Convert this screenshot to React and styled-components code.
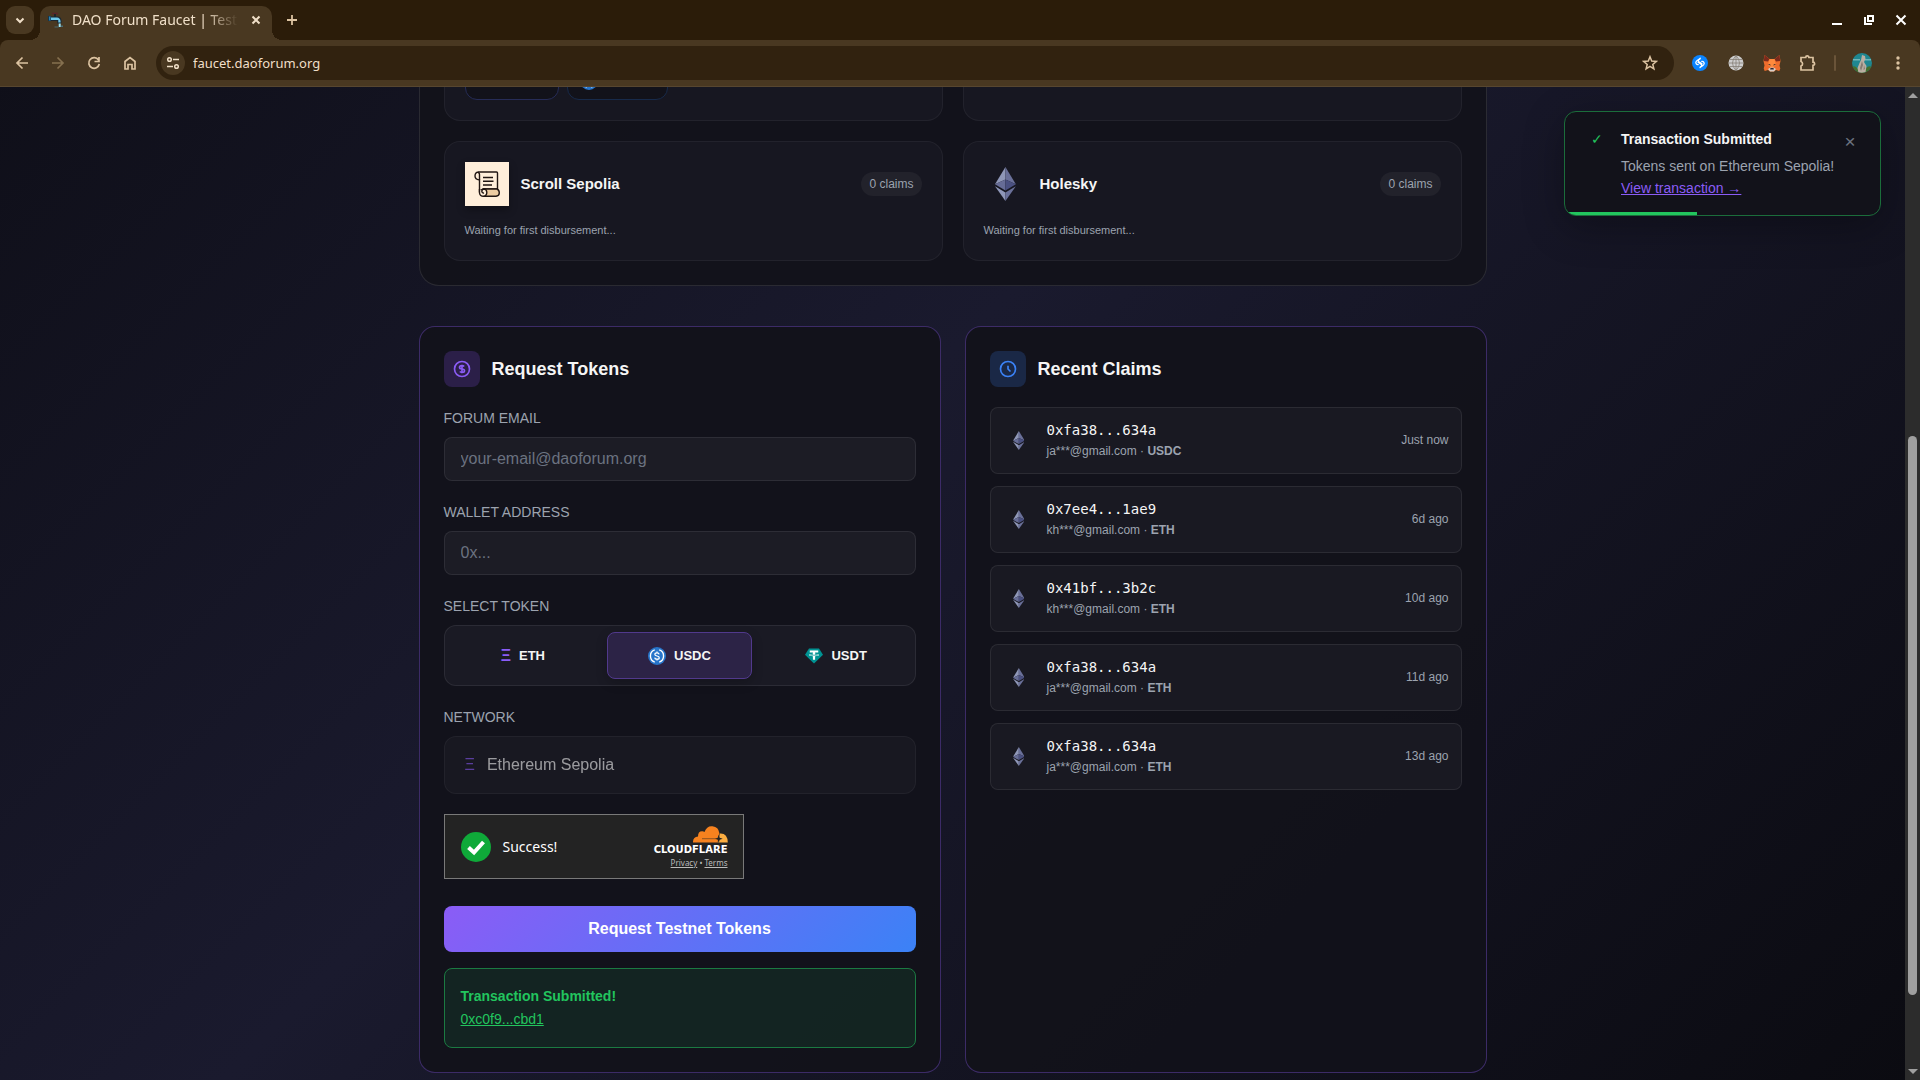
import React, { useState } from 'react';
import styled, { createGlobalStyle } from 'styled-components';

const GlobalStyle = createGlobalStyle`
  * {
    box-sizing: border-box;
  }

  body {
    margin: 0;
    background: #0a0a0f;
    color: #f5f5f5;
    font-family: 'Liberation Sans', Arial, sans-serif;
    font-size: 14px;
  }

  button,
  input {
    font-family: inherit;
  }
`;

/* ---------- browser frame ---------- */

const Window = styled.div`
  height: 100vh;
  display: flex;
  flex-direction: column;
  overflow: hidden;
`;

const TabStrip = styled.header`
  display: flex;
  height: 40px;
  padding: 6px 5px 0 6px;
  background: #2b1c09;
  color: #f0dfc8;
  font-family: 'Noto Sans', sans-serif;
`;

const ChromeButton = styled.button`
  display: flex;
  align-items: center;
  justify-content: center;
  width: ${(p) => p.$size || 28}px;
  height: 28px;
  padding: 0;
  border: 0;
  border-radius: 9px;
  background: ${(p) => p.$bg || 'none'};
  color: ${(p) => p.$color || '#dcc3a1'};
`;

const Tab = styled.div`
  position: relative;
  display: flex;
  align-items: center;
  gap: 8px;
  width: 232px;
  height: 34px;
  margin-left: 6px;
  padding: 0 6px 6px 8px;
  border-radius: 10px 10px 0 0;
  background: #493821;

  &::before,
  &::after {
    content: '';
    position: absolute;
    bottom: 0;
    width: 10px;
    height: 10px;
  }

  &::before {
    left: -10px;
    background: radial-gradient(circle at 0 0, transparent 10px, #493821 10px);
  }

  &::after {
    right: -10px;
    background: radial-gradient(circle at 100% 0, transparent 10px, #493821 10px);
  }
`;

const TabTitle = styled.span`
  flex: 1;
  white-space: nowrap;
  font-size: 14px;
  line-height: 20px;
  mask-image: linear-gradient(90deg, #000 80%, transparent);
`;

const WindowControls = styled.div`
  display: flex;
  gap: 4px;
  margin-left: auto;
`;

const ToolbarWrap = styled.div`
  background: #2b1c09;
`;

const Toolbar = styled.nav`
  display: flex;
  align-items: center;
  gap: 8px;
  height: 47px;
  padding: 0 8px;
  border-bottom: 1px solid #57462f;
  border-radius: 8px 8px 0 0;
  background: #493821;
`;

const Omnibox = styled.div`
  flex: 1;
  display: flex;
  align-items: center;
  gap: 8px;
  height: 34px;
  margin: 0 4px;
  padding: 0 10px 0 5px;
  border-radius: 17px;
  background: #31220f;
`;

const SiteInfo = styled.button`
  display: flex;
  align-items: center;
  justify-content: center;
  width: 24px;
  height: 24px;
  padding: 0;
  border: 0;
  border-radius: 50%;
  background: #493821;
  color: #f0dfc8;
`;

const Address = styled.input`
  flex: 1;
  min-width: 0;
  padding: 0;
  border: 0;
  outline: 0;
  background: none;
  color: #f0dfc8;
  font-family: 'Noto Sans', sans-serif;
  font-size: 13px;
`;

const Divider = styled.span`
  width: 2px;
  height: 16px;
  margin: 0 4px;
  border-radius: 1px;
  background: #6a5439;
`;

const Viewport = styled.div`
  flex: 1;
  min-height: 0;
  display: flex;
`;

const Page = styled.div`
  position: relative;
  flex: 1;
  overflow: hidden;
  background: linear-gradient(135deg, #0a0a0f 0%, #1a1a2e 50%, #0a0a0f 100%) 0 -590px / 100% 1706px;
`;

const Scrollbar = styled.div`
  display: flex;
  flex-direction: column;
  align-items: center;
  width: 15px;
  padding: 6px 0;
  background: #2c2c2c;
`;

const Arrow = styled.span`
  border: 5px solid transparent;
  border-top-width: ${(p) => (p.$down ? 5 : 0)}px;
  border-bottom-width: ${(p) => (p.$down ? 0 : 5)}px;
  border-${(p) => (p.$down ? 'top' : 'bottom')}-color: #9f9f9f;
`;

const Track = styled.div`
  flex: ${(p) => p.$grow};
`;

const Thumb = styled.div`
  flex: 558;
  width: 9px;
  border-radius: 5px;
  background: #9f9f9f;
`;

/* ---------- page ---------- */

const Container = styled.main`
  max-width: 1068px;
  margin: 0 auto;
`;

const Overview = styled.section`
  display: grid;
  grid-template-columns: 1fr 1fr;
  gap: 20px;
  padding: 0 24px 24px;
  border: 1px solid rgba(255, 255, 255, 0.1);
  border-top: 0;
  border-radius: 0 0 20px 20px;
  background: rgba(18, 18, 26, 0.95);
`;

const NetworkCard = styled.article`
  padding: 20px;
  border: 1px solid rgba(255, 255, 255, 0.05);
  border-radius: 16px;
  background: #171721;
`;

const ScrolledCard = styled(NetworkCard)`
  display: flex;
  gap: 8px;
  padding-top: 0;
  border-top: 0;
  border-radius: 0 0 16px 16px;
`;

const TokenChip = styled.div`
  width: ${(p) => p.$width}px;
  height: 37px;
  margin-top: -24px;
  padding: 8px 12px;
  border: 1px solid ${(p) => p.$border};
  border-radius: 12px;
  background: #12121a;
`;

const CardHead = styled.div`
  display: flex;
  align-items: center;
  gap: 12px;
  margin-bottom: 15px;

  h3 {
    margin: 0;
    font-size: 15px;
    line-height: 18px;
  }
`;

const CardIcon = styled.div`
  display: flex;
  align-items: center;
  justify-content: center;
  width: 44px;
  height: 44px;
  background: ${(p) => p.$bg || 'none'};
  box-shadow: ${(p) => (p.$bg ? '0 4px 8px rgba(0, 0, 0, 0.3)' : 'none')};
`;

const Badge = styled.span`
  margin-left: auto;
  padding: 0 8px;
  border-radius: 12px;
  background: #22222b;
  color: #9ca3af;
  font-size: 12px;
  line-height: 24px;
`;

const Muted = styled.p`
  margin: 0 0 1px;
  color: #9ca3af;
  font-size: 11px;
  line-height: 18px;
`;

const Columns = styled.div`
  display: grid;
  grid-template-columns: 1fr 1fr;
  gap: 24px;
  margin-top: 40px;
`;

const Panel = styled.section`
  padding: 24px;
  border: 1px solid rgba(139, 92, 246, 0.35);
  border-radius: 16px;
  background: rgba(18, 18, 26, 0.95);
`;

const PanelHead = styled.div`
  display: flex;
  align-items: center;
  gap: 12px;
  margin-bottom: 20px;

  h2 {
    margin: 0;
    font-size: 18px;
  }
`;

const PanelIcon = styled.span`
  display: flex;
  align-items: center;
  justify-content: center;
  width: 36px;
  height: 36px;
  border-radius: 8px;
  background: ${(p) => p.$bg};
  color: ${(p) => p.$color};
`;

const Field = styled.div`
  display: flex;
  flex-direction: column;
  gap: 8px;
  margin-bottom: 20px;
`;

const Label = styled.label`
  color: #9ca3af;
  font-size: 14px;
  line-height: 22px;
  text-transform: uppercase;
`;

const TextInput = styled.input`
  width: 100%;
  height: 44px;
  padding: 0 16px;
  border: 1px solid rgba(255, 255, 255, 0.08);
  border-radius: 8px;
  outline: 0;
  background: #1c1c25;
  color: #f5f5f5;
  font-size: 16px;

  &::placeholder {
    color: #6b7280;
  }
`;

const TokenGroup = styled.div`
  display: grid;
  grid-template-columns: repeat(3, 1fr);
  gap: 12px;
  padding: 6px;
  border: 1px solid rgba(255, 255, 255, 0.08);
  border-radius: 12px;
  background: #1a1a24;
`;

const TokenButton = styled.button`
  display: flex;
  align-items: center;
  justify-content: center;
  gap: 8px;
  height: 47px;
  padding: 0;
  border: 1px solid ${(p) => (p.$active ? '#51398c' : 'transparent')};
  border-radius: 8px;
  background: ${(p) => (p.$active ? '#2c2346' : 'none')};
  box-shadow: ${(p) => (p.$active ? '0 4px 12px rgba(0, 0, 0, 0.2)' : 'none')};
  color: #f5f5f5;
  font-size: 13px;
  font-weight: 700;
  cursor: pointer;
`;

const Xi = styled.span`
  color: #8b5cf6;
  font-size: 16px;
`;

const NetworkSelect = styled.button`
  display: flex;
  align-items: center;
  gap: 12px;
  height: 58px;
  padding: 0 20px;
  border: 1px solid rgba(255, 255, 255, 0.08);
  border-radius: 12px;
  background: #1c1c25;
  color: #f5f5f5;
  font-size: 16px;
  opacity: 0.6;
`;

const Turnstile = styled.div`
  display: flex;
  align-items: center;
  gap: 12px;
  width: 300px;
  height: 65px;
  margin-bottom: 27px;
  padding: 0 15px 0 16px;
  border: 1px solid #797979;
  background: #232323;
  color: #fff;
  font-family: 'Noto Sans', sans-serif;
  font-size: 14px;
`;

const Cloudflare = styled.div`
  display: flex;
  flex-direction: column;
  align-items: flex-end;
  margin-left: auto;

  strong {
    margin-top: 1px;
    font-family: 'DejaVu Sans', sans-serif;
    font-size: 10px;
    line-height: 12px;
  }

  small {
    margin-top: 2px;
    color: #bbb;
    font-size: 8px;
    line-height: 10px;
  }

  a {
    color: inherit;
  }
`;

const SubmitButton = styled.button`
  width: 100%;
  height: 46px;
  border: 0;
  border-radius: 8px;
  background: linear-gradient(135deg, #8b5cf6, #3b82f6);
  color: #fff;
  font-size: 16px;
  font-weight: 700;
  cursor: pointer;
`;

const Result = styled.div`
  display: flex;
  flex-direction: column;
  align-items: flex-start;
  margin-top: 16px;
  padding: 16px;
  border: 1px solid #1b7a42;
  border-radius: 8px;
  background: rgba(34, 197, 94, 0.1);
  color: #22c55e;
  font-size: 14px;
  line-height: 23px;

  a {
    color: inherit;
  }
`;

const ClaimList = styled.ul`
  display: grid;
  gap: 12px;
  margin: 0;
  padding: 0;
  list-style: none;
`;

const Claim = styled.li`
  display: flex;
  align-items: center;
  gap: 12px;
  padding: 11px 12px 12px;
  border: 1px solid rgba(255, 255, 255, 0.08);
  border-radius: 8px;
  background: #191922;
  color: #9ca3af;
  font-size: 12px;

  time {
    margin-left: auto;
  }
`;

const ClaimIcon = styled.span`
  display: flex;
  justify-content: center;
  width: 32px;
`;

const Wallet = styled.div`
  margin-bottom: 1px;
  color: #f5f5f5;
  font-family: 'DejaVu Sans Mono', monospace;
  font-size: 14px;
  line-height: 22px;
`;

const Account = styled.div`
  line-height: 19px;
`;

const Toast = styled.aside`
  position: absolute;
  top: 24px;
  right: 24px;
  display: flex;
  gap: 12px;
  width: 317px;
  padding: 16px 20px;
  overflow: hidden;
  border: 1px solid #1b6d3b;
  border-radius: 12px;
  background: #12121a;
  box-shadow: 0 10px 40px rgba(0, 0, 0, 0.3);
  line-height: 22px;
  white-space: nowrap;
`;

const ToastMark = styled.span`
  flex: none;
  width: 24px;
  color: #22c55e;
  text-align: center;
`;

const ToastBody = styled.div`
  flex: 1;
  min-width: 0;

  p {
    margin: 5px 0 0;
    color: #9ca3af;
  }

  a {
    display: block;
    width: max-content;
    color: #8b5cf6;
  }
`;

const ToastClose = styled.button`
  flex: none;
  align-self: flex-start;
  width: 20px;
  height: 28px;
  padding: 0;
  border: 0;
  background: none;
  color: #6b7280;
  font-size: 19px;
  line-height: 28px;
`;

const ToastProgress = styled.span`
  position: absolute;
  left: 0;
  bottom: 0;
  width: 42%;
  height: 3px;
  background: #22c55e;
`;

/* ---------- icons ---------- */

const Stroke = ({ size = 16, width = 2, view = 16, children }) => (
  <svg
    width={size}
    height={size}
    viewBox={`0 0 ${view} ${view}`}
    fill="none"
    stroke="currentColor"
    strokeWidth={width}
    aria-hidden="true"
  >
    {children}
  </svg>
);

const EthLogo = ({ height }) => (
  <svg height={height} viewBox="0 0 784 1277" aria-hidden="true">
    <path fill="#8f97b8" d="M392 0 0 650l392-178z" />
    <path fill="#6a7099" d="M392 0v472l392 178z" />
    <path fill="#666c96" d="m0 650 392 232V472z" />
    <path fill="#4a5080" d="m392 882 392-232-392-178z" />
    <path fill="#8f97b8" d="m0 725 392 552V957z" />
    <path fill="#6a7099" d="M392 957v320l392-552z" />
  </svg>
);

const ScrollLogo = () => (
  <svg width="26" height="26" viewBox="0 0 26 26" fill="none" stroke="#201512" strokeWidth="1.4" aria-hidden="true">
    <path fill="#ffeeda" d="M4 1h18.500q1 0 1 1v16H9l-3.500 2V9C2 8.500 1 7 1 5q0-4 4-4z" />
    <path d="M5.500 9V3.500Q5.300 1.500 4 1.800" />
    <path d="M9 6.500h10M9 10.200h10.500M9 14h9" strokeWidth="1.600" />
    <path fill="#edcca2" d="M9.500 18H23q2.300 1 2.300 4T22 25.300H9.500z" />
    <path fill="#ffeeda" d="M5.500 18v4q.5 3.300 4 3.300 3.500-.5 3.300-4.300-.4-3-3-3-2 .4-2 2.400.4 2 2.200 1.600" />
  </svg>
);

const UsdcLogo = () => (
  <svg width="18" height="18" viewBox="0 0 32 32" fill="none" aria-hidden="true">
    <circle cx="16" cy="16" r="16" fill="#2775ca" />
    <path
      d="M12 5.300a11.300 11.300 0 0 0 0 21.400M20 5.300a11.300 11.300 0 0 1 0 21.400"
      stroke="#fff"
      strokeWidth="2.400"
    />
    <path
      d="M19.800 13c-.3-1.700-1.700-2.600-3.800-2.600-2.300 0-3.800 1.100-3.800 2.800 0 3.900 7.800 1.700 7.800 5.700 0 1.700-1.600 2.800-4 2.800s-3.900-1-4.100-2.900M16 8v2.400M16 21.700V24"
      stroke="#fff"
      strokeWidth="2.200"
    />
  </svg>
);

const UsdtLogo = () => (
  <svg width="18" height="18" viewBox="0 0 36 36" aria-hidden="true">
    <path fill="#009393" d="M8 3h20l8 12.500L18 33 0 15.500z" />
    <path
      fill="#fff"
      d="M9.500 7h17v4h-6.300v2.500c4.400.3 7.800 1.200 7.800 2.400s-3.400 2.200-7.800 2.400v7h-4.400v-7C11.400 18 8 17.200 8 15.900s3.400-2.100 7.800-2.400V11H9.500zm6.300 7.500c-3.300.2-5.900.7-5.900 1.300 0 .7 3.600 1.300 8.100 1.300s8.100-.6 8.100-1.300c0-.6-2.600-1.100-5.900-1.300v1.200h-4.400z"
    />
  </svg>
);

const FaucetIcon = () => (
  <svg width="16" height="16" viewBox="0 0 16 16" aria-hidden="true">
    <path stroke="#5a2328" strokeWidth="1.500" d="M4 1.500h6" />
    <path stroke="#1d232b" strokeWidth="2" d="M7 2v3" />
    <path fill="#14354b" d="M0 4h3v5H0z" />
    <path fill="#2b7fae" d="M1 4.500h1.500v4H1z" />
    <path fill="#1a2731" d="M3 4.500h6.500q4 0 4 4.500v2.500H9.300V9H3z" />
    <path fill="#6cc6e8" d="M3 5.500h6q3.300.3 3.600 4v1h-2.300V8H3z" />
    <path fill="#9ce5f7" d="M10.700 11.500h2V15h-2z" />
    <path fill="#4a6a72" d="M6.500 14.500h4v1h-4zM13 13.500h2v1.500h-2z" />
  </svg>
);

const FoxIcon = () => (
  <svg width="18" height="18" viewBox="0 0 18 18" aria-hidden="true">
    <path fill="#ee6c2c" d="m1.500 1 5 4h5l5-4 1 6-1 4.500.8 3-1 2.500-3.300-1-2 1.500H7L5 16l-3.300 1-1-2.500.8-3L.5 7z" />
    <path fill="#7a2a1c" d="m1.500 1 5 4L5 7.500.8 7zM16.500 1l-5 4L13 7.500l4.200-.5z" />
    <path fill="#ff8a3d" d="m6.500 5-1.500 6 2.500 2h3l2.500-2-1.500-6z" />
    <path fill="#33262c" d="m4.800 10 2.400.3.300 1.500zM13.200 10l-2.400.3-.3 1.500z" />
    <path fill="#d8cfc8" d="m5 15 2.500-1.500h3L13 15l-2 2.500H7z" />
    <path fill="#33262c" d="M7.500 14h3l.4 1.500H7.100z" />
  </svg>
);

const ShazamIcon = () => (
  <svg width="16" height="16" viewBox="0 0 16 16" fill="none" aria-hidden="true">
    <circle cx="8" cy="8" r="8" fill="#0a84ff" />
    <path
      d="M6.200 9.600C4.500 9.800 3 8 4.300 6.400 5.500 5 7.300 4.300 8.300 3.300M6 7.300 9 9.200q1.200 1 .2 2L8.200 12M9.800 6.400c1.700-.2 3.200 1.600 1.900 3.200-1.200 1.400-2.700 2-3.700 3M10 8.700 7 6.800q-1.200-1-.2-2L8 4"
      stroke="#fff"
      strokeWidth="1.300"
      strokeLinecap="round"
    />
  </svg>
);

const GlobeIcon = () => (
  <svg width="16" height="16" viewBox="0 0 16 16" fill="none" aria-hidden="true">
    <circle cx="8" cy="8" r="7.500" fill="#cdcdcd" />
    <path
      d="M8 .5v15M.5 8h15M2 4.500h12M2 11.500h12M8 .5Q1 8 8 15.500M8 .5Q15 8 8 15.500"
      stroke="#857f76"
      strokeWidth=".8"
    />
  </svg>
);

const AvatarIcon = () => (
  <svg width="20" height="20" viewBox="0 0 20 20" aria-hidden="true">
    <clipPath id="avatar-clip">
      <circle cx="10" cy="10" r="10" />
    </clipPath>
    <g clipPath="url(#avatar-clip)">
      <path fill="#1f8791" d="M0 0h20v20H0z" />
      <path fill="#6fb5b8" d="M1 6h7v1.500H1zM13 6h6v1.500h-6z" />
      <path fill="#46702f" d="M0 14q3-2 6 2l8-1q3-3 6-1v6H0z" />
      <path fill="#b9aea2" d="m10 2 3 1 .5 3L12 9l2.500 4-1 6.500-7 .5-1-5 2-5L9 7z" />
      <path fill="#857b72" d="m10 8 1 4-2 6-1-3zM12 12l1 4-1.500 1z" />
    </g>
  </svg>
);

const CloudIcon = () => (
  <svg width="35" height="17" viewBox="0 0 35 17" aria-hidden="true">
    <path fill="#f6821f" d="M0 16.500Q-.3 11 5 10.500 5 5 9.500 5.300q1 0 2 .6Q14-.5 19.500.3q6 .5 7 7.200l-2 9z" />
    <path fill="#fbad41" d="M27 7.500q7.500-.5 7.800 9H24.500z" />
    <path fill="#232323" d="M9 12.200h14.500v1H9z" opacity=".5" />
    <path fill="#232323" d="m25.700 8.500 1 3.200 3 1.100-3 1-1 3.200-1-3.200-2.500-1 2.500-1.100z" />
  </svg>
);

const SuccessIcon = () => (
  <svg width="30" height="30" viewBox="0 0 30 30" fill="none" aria-hidden="true">
    <circle cx="15" cy="15" r="15" fill="#0fa939" />
    <path d="m7.500 15.500 5.500 5L22.500 10" stroke="#fff" strokeWidth="4" />
  </svg>
);

/* ---------- data ---------- */

const networks = [
  { name: 'Scroll Sepolia', icon: <ScrollLogo />, bg: '#ffeeda' },
  { name: 'Holesky', icon: <EthLogo height={34} /> },
];

const tokens = [
  { name: 'ETH', icon: <Xi>Ξ</Xi> },
  { name: 'USDC', icon: <UsdcLogo /> },
  { name: 'USDT', icon: <UsdtLogo /> },
];

const claims = [
  { wallet: '0xfa38...634a', email: 'ja***@gmail.com', token: 'USDC', time: 'Just now' },
  { wallet: '0x7ee4...1ae9', email: 'kh***@gmail.com', token: 'ETH', time: '6d ago' },
  { wallet: '0x41bf...3b2c', email: 'kh***@gmail.com', token: 'ETH', time: '10d ago' },
  { wallet: '0xfa38...634a', email: 'ja***@gmail.com', token: 'ETH', time: '11d ago' },
  { wallet: '0xfa38...634a', email: 'ja***@gmail.com', token: 'ETH', time: '13d ago' },
];

/* ---------- components ---------- */

function BrowserBar() {
  return (
    <>
      <TabStrip>
        <ChromeButton $bg="#493821" $color="#f0dfc8" aria-label="Search tabs">
          <Stroke><path d="m4.500 6.500 3.500 3.500 3.500-3.500" /></Stroke>
        </ChromeButton>
        <Tab>
          <FaucetIcon />
          <TabTitle>DAO Forum Faucet | Test</TabTitle>
          <ChromeButton $size={20} $color="#f0dfc8" aria-label="Close tab">
            <Stroke><path d="m4.500 4.500 7 7m0-7-7 7" /></Stroke>
          </ChromeButton>
        </Tab>
        <ChromeButton $size={40} aria-label="New tab">
          <Stroke width={1.8}><path d="M8 3v10M3 8h10" /></Stroke>
        </ChromeButton>
        <WindowControls>
          <ChromeButton $color="#fff" aria-label="Minimize">
            <Stroke><path d="M3 12h10" /></Stroke>
          </ChromeButton>
          <ChromeButton $color="#fff" aria-label="Restore">
            <Stroke><path d="M7 4h5v5H7zM4 5v7h7" /></Stroke>
          </ChromeButton>
          <ChromeButton $color="#fff" aria-label="Close window">
            <Stroke><path d="m3.500 3.500 9 9m0-9-9 9" /></Stroke>
          </ChromeButton>
        </WindowControls>
      </TabStrip>
      <ToolbarWrap>
        <Toolbar>
          <ChromeButton aria-label="Back">
            <Stroke width={1.7}><path d="M14 8H3m5.500-5.500L3 8l5.500 5.500" /></Stroke>
          </ChromeButton>
          <ChromeButton $color="#85704f" aria-label="Forward">
            <Stroke width={1.7}><path d="M2 8h11M7.500 2.500 13 8l-5.500 5.500" /></Stroke>
          </ChromeButton>
          <ChromeButton aria-label="Reload">
            <Stroke width={1.7}><path d="M12.500 5A5.300 5.300 0 1 0 13.300 9M13 2v4.500H8.500" /></Stroke>
          </ChromeButton>
          <ChromeButton aria-label="Home">
            <Stroke width={1.7}><path d="M3 6.500 8 2.500l5 4v7.500h-3V9.500H6V14H3z" /></Stroke>
          </ChromeButton>
          <Omnibox>
            <SiteInfo aria-label="View site information">
              <Stroke width={1.5}>
                <circle cx="4.500" cy="4.500" r="1.800" />
                <circle cx="11.500" cy="11.500" r="1.800" />
                <path d="M8 4.500h6M2 11.500h6" />
              </Stroke>
            </SiteInfo>
            <Address aria-label="Address" value="faucet.daoforum.org" readOnly />
            <ChromeButton aria-label="Bookmark this page">
              <Stroke width={1.5}>
                <path d="m8 1.800 1.700 4.300 4.600.3-3.500 3 1.100 4.500L8 11.400l-3.900 2.500 1.100-4.500-3.500-3 4.600-.3z" />
              </Stroke>
            </ChromeButton>
          </Omnibox>
          <ChromeButton aria-label="Shazam"><ShazamIcon /></ChromeButton>
          <ChromeButton aria-label="Web extension"><GlobeIcon /></ChromeButton>
          <ChromeButton aria-label="MetaMask"><FoxIcon /></ChromeButton>
          <ChromeButton aria-label="Extensions">
            <Stroke size={18} view={18} width={1.7}>
              <path d="M2 3.500h4.700a1.600 1.600 0 0 1 3.200 0H14v4.700a1.600 1.600 0 0 1 0 3.200V16H2v-4a2.400 2.400 0 0 0 0-4.500z" />
            </Stroke>
          </ChromeButton>
          <Divider />
          <ChromeButton aria-label="Profile"><AvatarIcon /></ChromeButton>
          <ChromeButton aria-label="Menu">
            <svg width="16" height="16" viewBox="0 0 16 16" fill="currentColor" aria-hidden="true">
              <circle cx="8" cy="3" r="1.700" />
              <circle cx="8" cy="8" r="1.700" />
              <circle cx="8" cy="13" r="1.700" />
            </svg>
          </ChromeButton>
        </Toolbar>
      </ToolbarWrap>
    </>
  );
}

function NetworkOverview() {
  return (
    <Overview>
      <ScrolledCard>
        <TokenChip $width={94} $border="#262c57" />
        <TokenChip $width={101} $border="#172a4a">
          <UsdcLogo />
        </TokenChip>
      </ScrolledCard>
      <ScrolledCard />
      {networks.map((network) => (
        <NetworkCard key={network.name}>
          <CardHead>
            <CardIcon $bg={network.bg}>{network.icon}</CardIcon>
            <h3>{network.name}</h3>
            <Badge>0 claims</Badge>
          </CardHead>
          <Muted>Waiting for first disbursement...</Muted>
        </NetworkCard>
      ))}
    </Overview>
  );
}

function RequestForm() {
  const [token, setToken] = useState('USDC');

  return (
    <Panel>
      <PanelHead>
        <PanelIcon $bg="#2b1f48" $color="#8b5cf6">
          <Stroke size={20} view={24}>
            <path d="M12 8c-1.657 0-3 .895-3 2s1.343 2 3 2 3 .895 3 2-1.343 2-3 2m0-8c1.110 0 2.080.402 2.599 1M12 8V7m0 1v8m0 0v1m0-1c-1.110 0-2.080-.402-2.599-1M21 12a9 9 0 1 1-18 0 9 9 0 0 1 18 0z" />
          </Stroke>
        </PanelIcon>
        <h2>Request Tokens</h2>
      </PanelHead>
      <Field>
        <Label htmlFor="email">Forum Email</Label>
        <TextInput id="email" type="email" placeholder="your-email@daoforum.org" />
      </Field>
      <Field>
        <Label htmlFor="wallet">Wallet Address</Label>
        <TextInput id="wallet" type="text" placeholder="0x..." />
      </Field>
      <Field>
        <Label as="span" id="token-label">Select Token</Label>
        <TokenGroup role="group" aria-labelledby="token-label">
          {tokens.map((item) => (
            <TokenButton
              key={item.name}
              type="button"
              $active={item.name === token}
              aria-pressed={item.name === token}
              onClick={() => setToken(item.name)}
            >
              {item.icon}
              {item.name}
            </TokenButton>
          ))}
        </TokenGroup>
      </Field>
      <Field>
        <Label htmlFor="network">Network</Label>
        <NetworkSelect id="network" type="button" disabled>
          <Xi>Ξ</Xi>
          Ethereum Sepolia
        </NetworkSelect>
      </Field>
      <Turnstile>
        <SuccessIcon />
        <span>Success!</span>
        <Cloudflare>
          <CloudIcon />
          <strong>CLOUDFLARE</strong>
          <small>
            <a href="#privacy">Privacy</a> • <a href="#terms">Terms</a>
          </small>
        </Cloudflare>
      </Turnstile>
      <SubmitButton type="button">Request Testnet Tokens</SubmitButton>
      <Result>
        <strong>Transaction Submitted!</strong>
        <a href="#tx">0xc0f9...cbd1</a>
      </Result>
    </Panel>
  );
}

function RecentClaims() {
  return (
    <Panel>
      <PanelHead>
        <PanelIcon $bg="#1a2846" $color="#3b82f6">
          <Stroke size={20} view={24}>
            <path d="M12 8v4l3 3m6-3a9 9 0 1 1-18 0 9 9 0 0 1 18 0z" />
          </Stroke>
        </PanelIcon>
        <h2>Recent Claims</h2>
      </PanelHead>
      <ClaimList>
        {claims.map((claim, idx) => (
          <Claim key={idx}>
            <ClaimIcon>
              <EthLogo height={19} />
            </ClaimIcon>
            <div>
              <Wallet>{claim.wallet}</Wallet>
              <Account>
                {claim.email} · <strong>{claim.token}</strong>
              </Account>
            </div>
            <time>{claim.time}</time>
          </Claim>
        ))}
      </ClaimList>
    </Panel>
  );
}

function App() {
  return (
    <Window>
      <GlobalStyle />
      <BrowserBar />
      <Viewport>
        <Page>
          <Container>
            <NetworkOverview />
            <Columns>
              <RequestForm />
              <RecentClaims />
            </Columns>
          </Container>
          <Toast role="status">
            <ToastMark>✓</ToastMark>
            <ToastBody>
              <strong>Transaction Submitted</strong>
              <p>Tokens sent on Ethereum Sepolia!</p>
              <a href="#tx">View transaction →</a>
            </ToastBody>
            <ToastClose aria-label="Dismiss">×</ToastClose>
            <ToastProgress />
          </Toast>
        </Page>
        <Scrollbar>
          <Arrow />
          <Track $grow={338} />
          <Thumb />
          <Track $grow={74} />
          <Arrow $down />
        </Scrollbar>
      </Viewport>
    </Window>
  );
}

export default App;
